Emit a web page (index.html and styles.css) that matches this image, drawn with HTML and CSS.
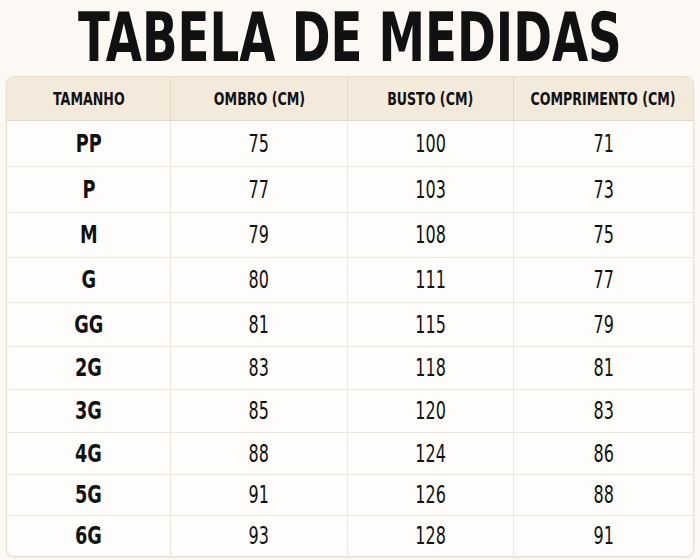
FILE: index.html
```html
<!DOCTYPE html>
<html lang="pt">
<head>
<meta charset="utf-8">
<link rel="stylesheet" href="styles.css">
</head>
<body>
<div class="page">
  <h1 class="title"><span class="t">TABELA DE MEDIDAS</span></h1>
  <div class="table">
    <div class="cell head"><span class="t">TAMANHO</span></div><div class="cell head"><span class="t">OMBRO (CM)</span></div><div class="cell head"><span class="t">BUSTO (CM)</span></div><div class="cell head"><span class="t">COMPRIMENTO (CM)</span></div>
    <div class="cell size"><span class="t">PP</span></div><div class="cell"><span class="t">75</span></div><div class="cell"><span class="t">100</span></div><div class="cell"><span class="t">71</span></div>
    <div class="cell size"><span class="t">P</span></div><div class="cell"><span class="t">77</span></div><div class="cell"><span class="t">103</span></div><div class="cell"><span class="t">73</span></div>
    <div class="cell size"><span class="t">M</span></div><div class="cell"><span class="t">79</span></div><div class="cell"><span class="t">108</span></div><div class="cell"><span class="t">75</span></div>
    <div class="cell size"><span class="t">G</span></div><div class="cell"><span class="t">80</span></div><div class="cell"><span class="t">111</span></div><div class="cell"><span class="t">77</span></div>
    <div class="cell size"><span class="t">GG</span></div><div class="cell"><span class="t">81</span></div><div class="cell"><span class="t">115</span></div><div class="cell"><span class="t">79</span></div>
    <div class="cell size"><span class="t">2G</span></div><div class="cell"><span class="t">83</span></div><div class="cell"><span class="t">118</span></div><div class="cell"><span class="t">81</span></div>
    <div class="cell size"><span class="t">3G</span></div><div class="cell"><span class="t">85</span></div><div class="cell"><span class="t">120</span></div><div class="cell"><span class="t">83</span></div>
    <div class="cell size"><span class="t">4G</span></div><div class="cell"><span class="t">88</span></div><div class="cell"><span class="t">124</span></div><div class="cell"><span class="t">86</span></div>
    <div class="cell size"><span class="t">5G</span></div><div class="cell"><span class="t">91</span></div><div class="cell"><span class="t">126</span></div><div class="cell"><span class="t">88</span></div>
    <div class="cell size last"><span class="t">6G</span></div><div class="cell last"><span class="t">93</span></div><div class="cell last"><span class="t">128</span></div><div class="cell last"><span class="t">91</span></div>
  </div>
</div>
</body>
</html>
```
FILE: styles.css
```css
html, body {
  margin: 0;
  padding: 0;
  background: #fcf9f4;
}
.page {
  width: 700px;
  height: 560px;
  display: flex;
  flex-direction: column;
  align-items: flex-start;
  font-family: "DejaVu Sans", sans-serif;
  font-stretch: condensed;
  color: #111;
}
.t {
  display: inline-block;
  white-space: nowrap;
  transform: scaleX(0.76);
}
.title {
  margin: 0;
  width: 700px;
  height: 76px;
  display: flex;
  align-items: center;
  justify-content: center;
  font-size: 67px;
  font-weight: 700;
  line-height: 1;
}
.title .t {
  transform: scaleX(0.775);
}
.table {
  margin-left: 6px;
  display: grid;
  grid-template-columns: 164px 177px 166px 179px;
  grid-template-rows: 44px 46px 46px 45px 45px 44px 43px 43px 42px 41px 40px;
  border: 1px solid #e9dfcf;
  border-radius: 8px;
  overflow: hidden;
  background: #fefdfb;
  box-shadow: 0 1px 2px rgba(120, 100, 70, 0.12);
}
.cell {
  display: flex;
  align-items: center;
  justify-content: center;
  font-size: 24px;
  font-weight: 400;
  border-right: 1px solid #efe7da;
  border-bottom: 1px solid #efe7da;
}
.cell .t {
  transform: scaleX(0.74);
}
.cell:nth-child(4n) {
  border-right: none;
}
.cell.last {
  border-bottom: none;
}
.head {
  background: #f3eadb;
  font-size: 18px;
  font-weight: 700;
  border-right-color: #e4d8c4;
  border-bottom-color: #e4d8c4;
}
.head .t {
  transform: scaleX(0.78);
}
.size {
  font-weight: 700;
  font-size: 24px;
}
.size .t {
  transform: scaleX(0.82);
}
```
